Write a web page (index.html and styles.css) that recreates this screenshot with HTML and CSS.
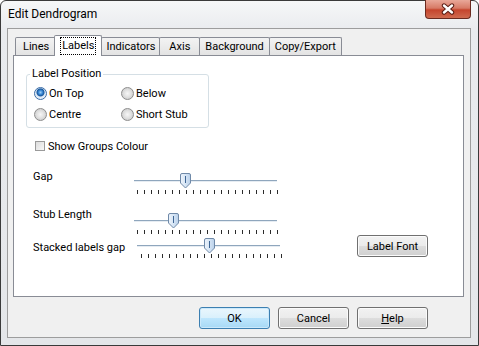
FILE: index.html
```html
<!DOCTYPE html>
<html lang="en">
<head>
<meta charset="UTF-8">
<title>Edit Dendrogram</title>
<link rel="stylesheet" href="styles.css">
</head>
<body>
    <div class="window">
        <div class="titlebar">
            <span class="title">Edit Dendrogram</span>
            <button class="close">
                <svg width="16" height="12" viewBox="0 0 16 12">
                    <path d="M4 2.5 L12 9.5 M12 2.5 L4 9.5" stroke="#5a1d14" stroke-width="4.4" stroke-linecap="round"/>
                    <path d="M4 2.5 L12 9.5 M12 2.5 L4 9.5" stroke="#fff" stroke-width="2.4" stroke-linecap="round"/>
                </svg>
            </button>
        </div>

        <div class="client">
            <div class="tabs">
                <div class="tab">Lines</div>
                <div class="tab active"><span class="focus">Labels</span></div>
                <div class="tab tight">Indicators</div>
                <div class="tab loose">Axis</div>
                <div class="tab">Background</div>
                <div class="tab">Copy/Export</div>
            </div>

            <div class="panel">
                <fieldset class="group">
                    <legend>Label Position</legend>
                    <div class="radio-grid">
                        <label class="radio"><span class="dot checked"></span>On Top</label>
                        <label class="radio"><span class="dot"></span>Below</label>
                        <label class="radio"><span class="dot"></span>Centre</label>
                        <label class="radio"><span class="dot"></span>Short Stub</label>
                    </div>
                </fieldset>

                <label class="check"><span class="box"></span>Show Groups Colour</label>

                <div class="sliders">
                    <div class="slider-row">
                        <span class="slider-label">Gap</span>
                        <svg class="slider" width="150" height="25" viewBox="0 0 150 25">
                            <defs>
                                <linearGradient id="thumbFill" x1="0" y1="0" x2="1" y2="0">
                                    <stop offset="0" stop-color="#eef4fb"/>
                                    <stop offset="0.5" stop-color="#d6e5f5"/>
                                    <stop offset="1" stop-color="#b9d0ea"/>
                                </linearGradient>
                            </defs>
                            <line x1="3" y1="10.5" x2="146" y2="10.5" stroke="#8fa6bd"/>
                            <line x1="3" y1="11.5" x2="146" y2="11.5" stroke="#e6ecf2"/>
                            <line x1="6" y1="22" x2="147" y2="22" stroke="#2b2b2b" stroke-width="4" stroke-dasharray="1 6"/>
                            <path d="M49.5 5 q0 -1.5 1.5 -1.5 h7 q1.5 0 1.5 1.5 v8 l-5 5 l-5 -5 z" fill="url(#thumbFill)" stroke="#6f89a8"/>
                            <line x1="54.5" y1="6" x2="54.5" y2="13" stroke="#3e6594"/>
                        </svg>
                    </div>
                    <div class="slider-row second">
                        <span class="slider-label">Stub Length</span>
                        <svg class="slider" width="150" height="25" viewBox="0 0 150 25">
                            <line x1="3" y1="10.5" x2="146" y2="10.5" stroke="#8fa6bd"/>
                            <line x1="3" y1="11.5" x2="146" y2="11.5" stroke="#e6ecf2"/>
                            <line x1="6" y1="22" x2="147" y2="22" stroke="#2b2b2b" stroke-width="4" stroke-dasharray="1 6"/>
                            <path d="M37.5 5 q0 -1.5 1.5 -1.5 h7 q1.5 0 1.5 1.5 v8 l-5 5 l-5 -5 z" fill="url(#thumbFill)" stroke="#6f89a8"/>
                            <line x1="42.5" y1="6" x2="42.5" y2="13" stroke="#3e6594"/>
                        </svg>
                    </div>
                    <div class="slider-row third">
                        <span class="slider-label wide">Stacked labels gap</span>
                        <svg class="slider" width="150" height="25" viewBox="0 0 150 25">
                            <line x1="3" y1="10.5" x2="146" y2="10.5" stroke="#8fa6bd"/>
                            <line x1="3" y1="11.5" x2="146" y2="11.5" stroke="#e6ecf2"/>
                            <line x1="7" y1="21" x2="148" y2="21" stroke="#2b2b2b" stroke-width="4" stroke-dasharray="1 6"/>
                            <path d="M70.5 5 q0 -1.5 1.5 -1.5 h7 q1.5 0 1.5 1.5 v8 l-5 5 l-5 -5 z" fill="url(#thumbFill)" stroke="#6f89a8"/>
                            <line x1="75.5" y1="6" x2="75.5" y2="13" stroke="#3e6594"/>
                        </svg>
                        <button class="btn font-btn">Label Font</button>
                    </div>
                </div>
            </div>

            <div class="buttons">
                <button class="btn default">OK</button>
                <button class="btn">Cancel</button>
                <button class="btn help"><u>H</u>elp</button>
            </div>
        </div>
    </div>
</body>
</html>
```

FILE: styles.css
```css
body {
    margin: 0;
    padding: 0;
    font-family: Roboto, "Liberation Sans", sans-serif;
    font-size: 11px;
    color: #000;
    background: #fff;
}
.window {
    width: 479px;
    height: 346px;
    box-sizing: border-box;
    border: 1px solid #3a3a3a;
    border-radius: 6px 6px 0 0;
    background: linear-gradient(to bottom, #f6f7f8 0, #e9ebee 30px, #e4e6e9 100%);
    padding: 0 7px 7px 6px;
    display: flex;
    flex-direction: column;
}
.titlebar {
    height: 27px;
    display: flex;
    justify-content: space-between;
    align-items: flex-start;
}
.title {
    font-size: 12px;
    line-height: 26px;
    margin-left: 1px;
    color: #000;
}
.close {
    width: 46px;
    height: 19px;
    margin-top: -1px;
    padding: 0;
    border: 1px solid #6a2a1f;
    border-top: none;
    border-radius: 0 0 4px 4px;
    background: linear-gradient(to bottom, #e9a899 0, #d77a66 45%, #c5452d 55%, #cf6a4f 100%);
    display: flex;
    align-items: center;
    justify-content: center;
}
.client {
    flex: 1;
    border: 1px solid #9d9d9d;
    background: #f0f0f0;
    display: flex;
    flex-direction: column;
}
.tabs {
    height: 26px;
    box-sizing: border-box;
    margin: 0 6px 0 5px;
    padding-left: 2px;
    display: flex;
    align-items: flex-end;
}
.tab {
    height: 18px;
    box-sizing: border-box;
    padding: 0 5px;
    line-height: 17px;
    border: 1px solid #898c95;
    border-bottom: none;
    border-radius: 2px 2px 0 0;
    background: linear-gradient(to bottom, #f3f3f3, #e3e3e3);
    margin-right: -1px;
}
.tab:first-child {
    padding: 0 7px;
}
.tab.tight {
    padding: 0 4px;
}
.tab.loose {
    padding: 0 9px;
}
.tab.active {
    height: 21px;
    margin: 0 -2px -1px -2px;
    padding: 0 6px;
    line-height: 19px;
    background: #fff;
    position: relative;
    z-index: 1;
}
.tab.active + .tab {
    margin-left: 1px;
}
.focus {
    outline: 1px dotted #000;
    padding: 1px 1px 2px;
}
.panel {
    height: 242px;
    box-sizing: border-box;
    margin: 0 6px 0 5px;
    border: 1px solid #898c95;
    background: #fff;
    padding: 11px 0 0 12px;
}
.group {
    width: 183px;
    box-sizing: border-box;
    margin: 0;
    padding: 0 0 2px 7px;
    min-width: 0;
    border: 1px solid #d5dfe5;
    border-radius: 3px;
}
.group legend {
    padding: 0 2px;
    margin-left: -4px;
    line-height: 14px;
}
.radio-grid {
    margin-top: 2px;
    display: grid;
    grid-template-columns: 87px auto;
    grid-auto-rows: 21px;
}
.radio {
    display: flex;
    align-items: center;
    gap: 2px;
}
.dot {
    width: 13px;
    height: 13px;
    box-sizing: border-box;
    border-radius: 50%;
    border: 1px solid #8d8d8d;
    background: radial-gradient(circle at 50% 50%, #f6f6f6 0, #e4e4e4 3px, #cfcfcf 6px);
}
.dot.checked {
    border-color: #3b6da7;
    background: radial-gradient(circle at 50% 40%, #9fd0f6 0, #3b8ad6 2px, #17569c 3.5px, #d7e6f4 4.5px, #eaf1f8 6px);
}
.check {
    margin: 11px 0 0 9px;
    height: 14px;
    display: flex;
    align-items: center;
    gap: 3px;
}
.box {
    width: 10px;
    height: 10px;
    box-sizing: border-box;
    border: 1px solid #9a9a9a;
    background: linear-gradient(135deg, #dcdcdc, #f7f7f7);
}
.sliders {
    margin: 17px 0 0 7px;
}
.slider-row {
    height: 25px;
    display: flex;
    align-items: flex-start;
}
.slider-row.second {
    margin-top: 15px;
}
.slider-label {
    width: 98px;
    line-height: 14px;
    margin-top: 0;
}
.slider-label.wide {
    width: 101px;
}
.second .slider-label {
    margin-top: -2px;
}
.third .slider-label {
    margin-top: 6px;
}
.slider {
    display: block;
}
.btn {
    width: 71px;
    height: 22px;
    padding: 0;
    border: 1px solid #707070;
    border-radius: 3px;
    font-family: Roboto, "Liberation Sans", sans-serif;
    font-size: 11px;
    color: #000;
    background: linear-gradient(to bottom, #f2f2f2 0, #ebebeb 50%, #dddddd 51%, #cfcfcf 100%);
    box-shadow: inset 0 0 0 1px #fbfbfb;
}
.btn u {
    text-decoration: underline;
}
.btn.default {
    border-color: #3c7fb1;
    background: linear-gradient(to bottom, #eaf6fd 0, #d9f0fc 50%, #bee6fd 51%, #a7d9f5 100%);
    box-shadow: inset 0 0 0 1px #cbe9fb;
}
.font-btn {
    margin-left: auto;
    margin-right: 35px;
}
.buttons {
    margin-top: 10px;
    padding-right: 42px;
    display: flex;
    justify-content: flex-end;
}
.buttons .btn + .btn {
    margin-left: 8px;
}
.buttons .help {
    margin-left: 10px;
}
```
